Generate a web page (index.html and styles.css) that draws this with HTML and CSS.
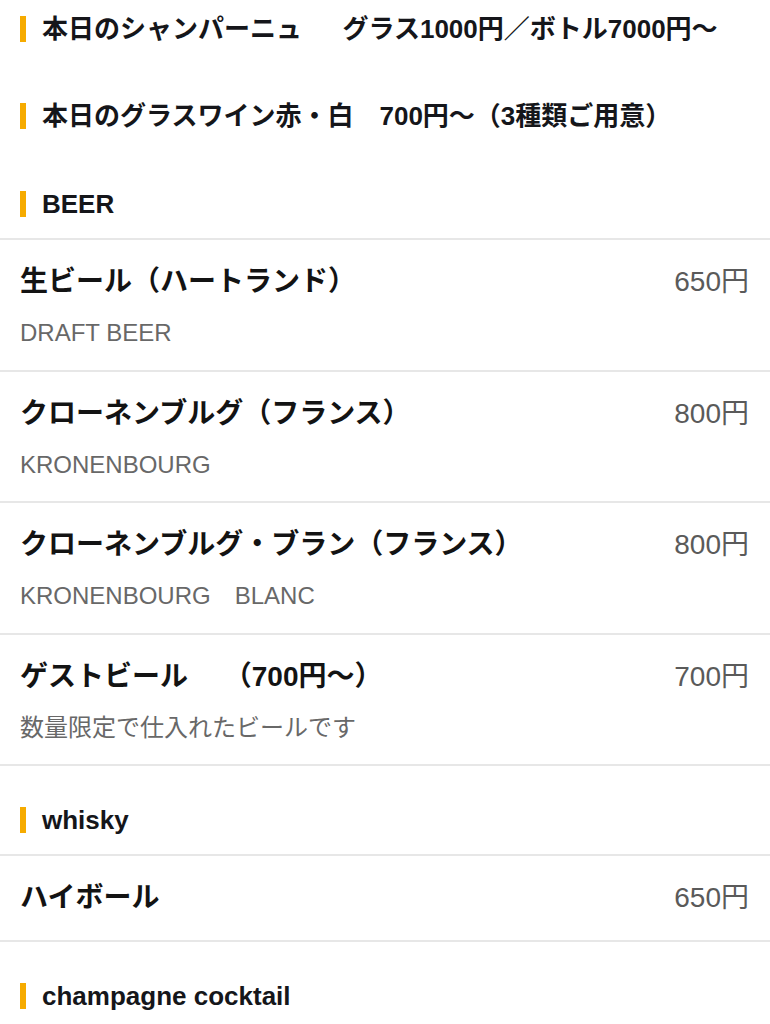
FILE: index.html
```html
<!DOCTYPE html>
<html lang="ja">
<head>
<meta charset="utf-8">
<title>Drink Menu</title>
<link rel="stylesheet" href="styles.css">
</head>
<body>
<div class="menu">
  <h2 class="cat cat-first">本日のシャンパーニュ　&nbsp;&nbsp;グラス1000円／ボトル7000円〜</h2>
  <h2 class="cat">本日のグラスワイン赤・白　700円〜（3種類ご用意）</h2>
  <h2 class="cat">BEER</h2>
  <ul class="items">
    <li class="item">
      <div class="item-main">
        <p class="item-name">生ビール（ハートランド）</p>
        <p class="item-sub">DRAFT BEER</p>
      </div>
      <span class="item-price">650円</span>
    </li>
    <li class="item">
      <div class="item-main">
        <p class="item-name">クローネンブルグ（フランス）</p>
        <p class="item-sub">KRONENBOURG</p>
      </div>
      <span class="item-price">800円</span>
    </li>
    <li class="item">
      <div class="item-main">
        <p class="item-name">クローネンブルグ・ブラン（フランス）</p>
        <p class="item-sub">KRONENBOURG　BLANC</p>
      </div>
      <span class="item-price">800円</span>
    </li>
    <li class="item">
      <div class="item-main">
        <p class="item-name">ゲストビール　&nbsp;（700円〜）</p>
        <p class="item-sub">数量限定で仕入れたビールです</p>
      </div>
      <span class="item-price">700円</span>
    </li>
  </ul>
  <h2 class="cat">whisky</h2>
  <ul class="items">
    <li class="item item-nosub">
      <div class="item-main">
        <p class="item-name">ハイボール</p>
      </div>
      <span class="item-price">650円</span>
    </li>
  </ul>
  <h2 class="cat">champagne cocktail</h2>
</div>
</body>
</html>
```
FILE: styles.css
```css
html, body {
  margin: 0;
  padding: 0;
  background: #ffffff;
}

body {
  font-family: "Liberation Sans", "Noto Sans CJK JP", sans-serif;
  color: #131313;
}

.menu {
  width: 770px;
  overflow: hidden;
}

.cat {
  display: flex;
  align-items: center;
  margin: 0;
  padding: 39px 20px 19px 20px;
  font-size: 26px;
  font-weight: bold;
  line-height: 30px;
  color: #15161a;
  white-space: nowrap;
}

.cat::before {
  content: "";
  flex: 0 0 6px;
  width: 6px;
  height: 26px;
  margin-right: 16px;
  background: #f6ab00;
}

.cat-first {
  padding-top: 14px;
  padding-bottom: 18px;
}

.items {
  list-style: none;
  margin: 0;
  padding: 0;
  border-top: 2px solid #e7e7e7;
}

.item {
  display: flex;
  justify-content: space-between;
  align-items: flex-start;
  padding: 26px 21px 22.5px 20px;
  border-bottom: 2px solid #e7e7e7;
}

.item-nosub {
  padding-top: 26px;
  padding-bottom: 26px;
}

.item-main {
  min-width: 0;
}

.item-name {
  margin: 0;
  font-size: 28px;
  font-weight: bold;
  line-height: 32px;
  color: #131313;
  white-space: nowrap;
}

.item-sub {
  margin: 21px 0 0 0;
  font-size: 24px;
  line-height: 28px;
  color: #686868;
  white-space: nowrap;
}

.item-price {
  font-size: 28px;
  line-height: 32px;
  color: #5a5a5a;
  white-space: nowrap;
}
```
